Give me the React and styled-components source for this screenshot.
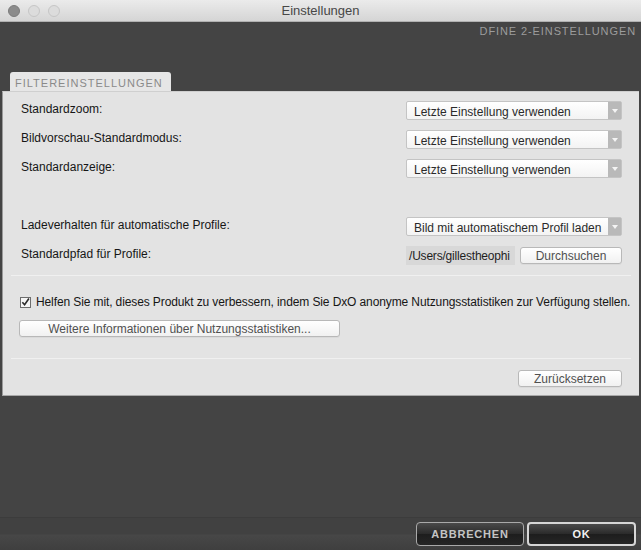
import React from "react";
import styled, { createGlobalStyle } from "styled-components";

const GlobalStyle = createGlobalStyle`
  html, body {
    margin: 0;
    padding: 0;
    background: #434343;
  }
  * {
    box-sizing: border-box;
  }
`;

const Window = styled.div`
  width: 641px;
  height: 550px;
  display: flex;
  flex-direction: column;
  font-family: "Liberation Sans", Arial, sans-serif;
  font-size: 12px;
  color: #1e1e1e;
  overflow: hidden;
`;

const TitleBar = styled.div`
  height: 22px;
  flex: none;
  position: relative;
  display: flex;
  align-items: center;
  justify-content: center;
  background: linear-gradient(#ebebeb, #d5d5d5);
  border-bottom: 1px solid #b1b1b1;
`;

const Lights = styled.div`
  position: absolute;
  left: 8px;
  top: 5px;
  display: flex;
  gap: 8px;
`;

const Light = styled.span`
  width: 12px;
  height: 12px;
  border-radius: 50%;
  background: ${(p) => (p.$active ? "#8c8c8c" : "#dcdcdc")};
  border: 1px solid ${(p) => (p.$active ? "#7c7c7c" : "#c6c6c6")};
`;

const Title = styled.div`
  font-size: 13px;
  color: #474747;
`;

const Body = styled.div`
  flex: 1;
  display: flex;
  flex-direction: column;
  background: #444444;
`;

const Brand = styled.div`
  height: 50px;
  padding: 3px 5px 0 0;
  text-align: right;
  font-size: 11px;
  letter-spacing: 0.9px;
  color: #9c9c9c;
`;

const TabStrip = styled.div`
  display: flex;
  padding-left: 10px;
`;

const Tab = styled.div`
  width: 161px;
  height: 19px;
  padding: 5px 0 0 5px;
  background: #e6e6e6;
  border-radius: 3px 3px 0 0;
  font-size: 11px;
  letter-spacing: 1px;
  color: #8a8a8a;
`;

const Panel = styled.div`
  margin: 0 2px;
  height: 305px;
  background: #e3e3e3;
  border-top: 1px solid #cfcfcf;
  border-left: 1px solid #9a9a9a;
  border-bottom: 1px solid #a8a8a8;
  display: flex;
  flex-direction: column;
`;

const Section = styled.div`
  padding: ${(p) => p.$pad || "0"};
  display: flex;
  flex-direction: column;
`;

const Row = styled.div`
  height: 29px;
  display: flex;
  align-items: center;
  justify-content: space-between;
  padding: 0 17px 0 18px;
  margin-top: ${(p) => p.$gap || 0}px;
`;

const Label = styled.span`
  margin-top: -3px;
  color: #161616;
`;

const Select = styled.div`
  width: 216px;
  height: 19px;
  display: flex;
  background: linear-gradient(#ffffff, #f3f3f3);
  border: 1px solid #c4c4c4;
  border-radius: 2px;
`;

const SelectText = styled.span`
  flex: 1;
  padding: 3px 0 0 7px;
  color: #2a2a2a;
`;

const Arrow = styled.span`
  width: 13px;
  display: flex;
  align-items: center;
  justify-content: center;
  background: #b9b9b9;
  &::after {
    content: "";
    border-left: 3.5px solid transparent;
    border-right: 3.5px solid transparent;
    border-top: 4px solid #f4f4f4;
  }
`;

const PathGroup = styled.div`
  display: flex;
  align-items: center;
  gap: 5px;
`;

const PathField = styled.div`
  width: 109px;
  height: 19px;
  padding: 3px 0 0 3px;
  background: #d8d8d8;
  color: #1e1e1e;
  overflow: hidden;
  white-space: nowrap;
  letter-spacing: -0.2px;
`;

const Button = styled.div`
  width: ${(p) => p.$w}px;
  height: 17px;
  display: flex;
  align-items: center;
  justify-content: center;
  background: linear-gradient(#ffffff, #f1f1f1);
  border: 1px solid #b8b8b8;
  border-radius: 3px;
  color: #505050;
  box-shadow: 0 1px 0 rgba(0, 0, 0, 0.04);
`;

const Separator = styled.div`
  height: 1px;
  margin: ${(p) => p.$m};
  background: #cfcfcf;
  border-bottom: 1px solid #f0f0f0;
`;

const CheckRow = styled.label`
  display: flex;
  align-items: center;
  gap: 5px;
  padding-left: 17px;
  height: 20px;
  white-space: nowrap;
  letter-spacing: -0.11px;
  color: #161616;
`;

const Box = styled.span`
  width: 11px;
  height: 11px;
  flex: none;
  display: flex;
  align-items: center;
  justify-content: center;
  background: #f5f5f5;
  border: 1px solid #6d6d6d;
`;

const ResetRow = styled.div`
  display: flex;
  justify-content: flex-end;
  padding: 11px 17px 0 0;
`;

const Filler = styled.div`
  flex: 1;
`;

const Footer = styled.div`
  height: 33px;
  flex: none;
  display: flex;
  justify-content: flex-end;
  align-items: flex-start;
  gap: 3px;
  padding: 4px 5px 0 0;
  background: linear-gradient(#414141 0, #414141 16px, #474747 17px, #3f3f3f 100%);
  border-top: 1px solid #3c3c3c;
`;

const DarkButton = styled.div`
  width: ${(p) => p.$w}px;
  height: 24px;
  display: flex;
  align-items: center;
  justify-content: center;
  border-radius: 4px;
  border: ${(p) => (p.$primary ? "2px solid #d6d6d6" : "1px solid #a9a9a9")};
  background: linear-gradient(#4a4a4a, #2a2a2a 50%, #1d1d1d 51%, #262626);
  color: ${(p) => (p.$primary ? "#f2f2f2" : "#c4c4c4")};
  font-size: 11px;
  font-weight: bold;
  letter-spacing: 0.8px;
`;

const Check = () => (
  <svg width="10" height="10" viewBox="0 0 10 10">
    <path d="M1.5 5.2 L4 8 L8.8 1.2" fill="none" stroke="#2b2b2b" strokeWidth="1.8" />
  </svg>
);

const selects = [
  "Standardzoom:",
  "Bildvorschau-Standardmodus:",
  "Standardanzeige:",
];

export default function App() {
  return (
    <>
      <GlobalStyle />
      <Window>
        <TitleBar>
          <Lights>
            <Light $active />
            <Light />
            <Light />
          </Lights>
          <Title>Einstellungen</Title>
        </TitleBar>
        <Body>
          <Brand>DFINE 2-EINSTELLUNGEN</Brand>
          <TabStrip>
            <Tab>FILTEREINSTELLUNGEN</Tab>
          </TabStrip>
          <Panel>
            <Section $pad="4px 0 0">
              {selects.map((label) => (
                <Row key={label}>
                  <Label>{label}</Label>
                  <Select>
                    <SelectText>Letzte Einstellung verwenden</SelectText>
                    <Arrow />
                  </Select>
                </Row>
              ))}
              <Row $gap={29}>
                <Label>Ladeverhalten für automatische Profile:</Label>
                <Select>
                  <SelectText>Bild mit automatischem Profil laden</SelectText>
                  <Arrow />
                </Select>
              </Row>
              <Row>
                <Label>Standardpfad für Profile:</Label>
                <PathGroup>
                  <PathField>/Users/gillestheophi</PathField>
                  <Button $w={102}>Durchsuchen</Button>
                </PathGroup>
              </Row>
            </Section>
            <Separator $m="5px 8px 0 8px" />
            <Section $pad="16px 0 0">
              <CheckRow>
                <Box>
                  <Check />
                </Box>
                Helfen Sie mit, dieses Produkt zu verbessern, indem Sie DxO anonyme Nutzungsstatistiken zur Verfügung stellen.
              </CheckRow>
              <Section $pad="8px 0 0 16px">
                <Button $w={321}>Weitere Informationen über Nutzungsstatistiken...</Button>
              </Section>
            </Section>
            <Separator $m="21px 8px 0 8px" />
            <ResetRow>
              <Button $w={104}>Zurücksetzen</Button>
            </ResetRow>
          </Panel>
          <Filler />
          <Footer>
            <DarkButton $w={108}>ABBRECHEN</DarkButton>
            <DarkButton $w={109} $primary>
              OK
            </DarkButton>
          </Footer>
        </Body>
      </Window>
    </>
  );
}
